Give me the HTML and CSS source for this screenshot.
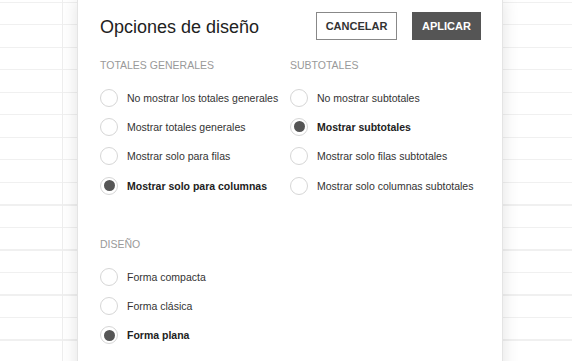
FILE: index.html
```html
<!DOCTYPE html>
<html lang="es">
<head>
<meta charset="utf-8">
<title>Opciones de diseño</title>
<link rel="stylesheet" href="styles.css">
</head>
<body>
<div class="sheet">
  <div class="dialog">
    <div class="header">
      <h1 class="title">Opciones de diseño</h1>
      <div class="actions">
        <button class="btn btn-outline">CANCELAR</button>
        <button class="btn btn-solid">APLICAR</button>
      </div>
    </div>
    <div class="columns">
      <div class="group">
        <div class="group-label">TOTALES GENERALES</div>
        <div class="option"><span class="radio"></span><span class="opt-text">No mostrar los totales generales</span></div>
        <div class="option"><span class="radio"></span><span class="opt-text">Mostrar totales generales</span></div>
        <div class="option"><span class="radio"></span><span class="opt-text">Mostrar solo para filas</span></div>
        <div class="option selected"><span class="radio"></span><span class="opt-text">Mostrar solo para columnas</span></div>
      </div>
      <div class="group">
        <div class="group-label">SUBTOTALES</div>
        <div class="option"><span class="radio"></span><span class="opt-text">No mostrar subtotales</span></div>
        <div class="option selected"><span class="radio"></span><span class="opt-text">Mostrar subtotales</span></div>
        <div class="option"><span class="radio"></span><span class="opt-text">Mostrar solo filas subtotales</span></div>
        <div class="option"><span class="radio"></span><span class="opt-text">Mostrar solo columnas subtotales</span></div>
      </div>
    </div>
    <div class="group group-layout">
      <div class="group-label">DISEÑO</div>
      <div class="option"><span class="radio"></span><span class="opt-text">Forma compacta</span></div>
      <div class="option"><span class="radio"></span><span class="opt-text">Forma clásica</span></div>
      <div class="option selected"><span class="radio"></span><span class="opt-text">Forma plana</span></div>
    </div>
  </div>
</div>
</body>
</html>
```
FILE: styles.css
```css
html, body {
  margin: 0;
  padding: 0;
  background: #fff;
}
body {
  font-family: "Liberation Sans", Arial, sans-serif;
  color: #333;
}
.sheet {
  width: 572px;
  height: 361px;
  overflow: hidden;
  display: flex;
  padding-left: 77px;
  box-sizing: border-box;
  background-color: #fff;
  background-image:
    linear-gradient(to right, transparent 62px, #eeeeee 62px, #eeeeee 63px, transparent 63px),
    repeating-linear-gradient(to bottom, transparent 0, transparent 2px, #f0f0f0 2px, #f0f0f0 3px, transparent 3px, transparent 22.5px);
}
.dialog {
  width: 426px;
  height: 400px;
  flex: none;
  background: #fff;
  box-shadow: 0 0 16px rgba(0, 0, 0, 0.12);
  border-left: 1px solid #e4e4e4;
  border-right: 1px solid #e4e4e4;
  box-sizing: border-box;
  padding: 12px 21px 0 22px;
}
.header {
  display: flex;
  align-items: center;
  justify-content: space-between;
  height: 28px;
}
.title {
  margin: 0;
  font-size: 18px;
  font-weight: normal;
  color: #222;
  line-height: 21px;
  position: relative;
  top: 1px;
}
.actions {
  display: flex;
  gap: 15px;
}
.btn {
  height: 28px;
  box-sizing: border-box;
  font-family: "Liberation Sans", Arial, sans-serif;
  font-size: 11px;
  font-weight: bold;
  letter-spacing: 0;
  padding: 0;
  cursor: pointer;
}
.btn-outline {
  width: 81px;
  background: #fff;
  color: #333;
  border: 1px solid #888;
}
.btn-solid {
  width: 69px;
  background: #555;
  color: #fff;
  border: 1px solid #555;
}
.columns {
  display: grid;
  grid-template-columns: 190px 1fr;
  margin-top: 19px;
}
.group-label {
  font-size: 10.5px;
  line-height: 13px;
  color: #999;
  margin-bottom: 11px;
}
.option {
  display: flex;
  align-items: center;
  height: 29.3px;
  font-size: 10.5px;
  color: #333;
}
.radio {
  width: 18px;
  height: 18px;
  box-sizing: border-box;
  border: 1px solid #d6d6d6;
  border-radius: 50%;
  margin-right: 9px;
  flex: none;
  display: flex;
  align-items: center;
  justify-content: center;
}
.option.selected .radio::after {
  content: "";
  width: 11px;
  height: 11px;
  border-radius: 50%;
  background: #555;
}
.option.selected .opt-text {
  font-weight: bold;
  color: #222;
}
.group-layout {
  margin-top: 38px;
}
```
